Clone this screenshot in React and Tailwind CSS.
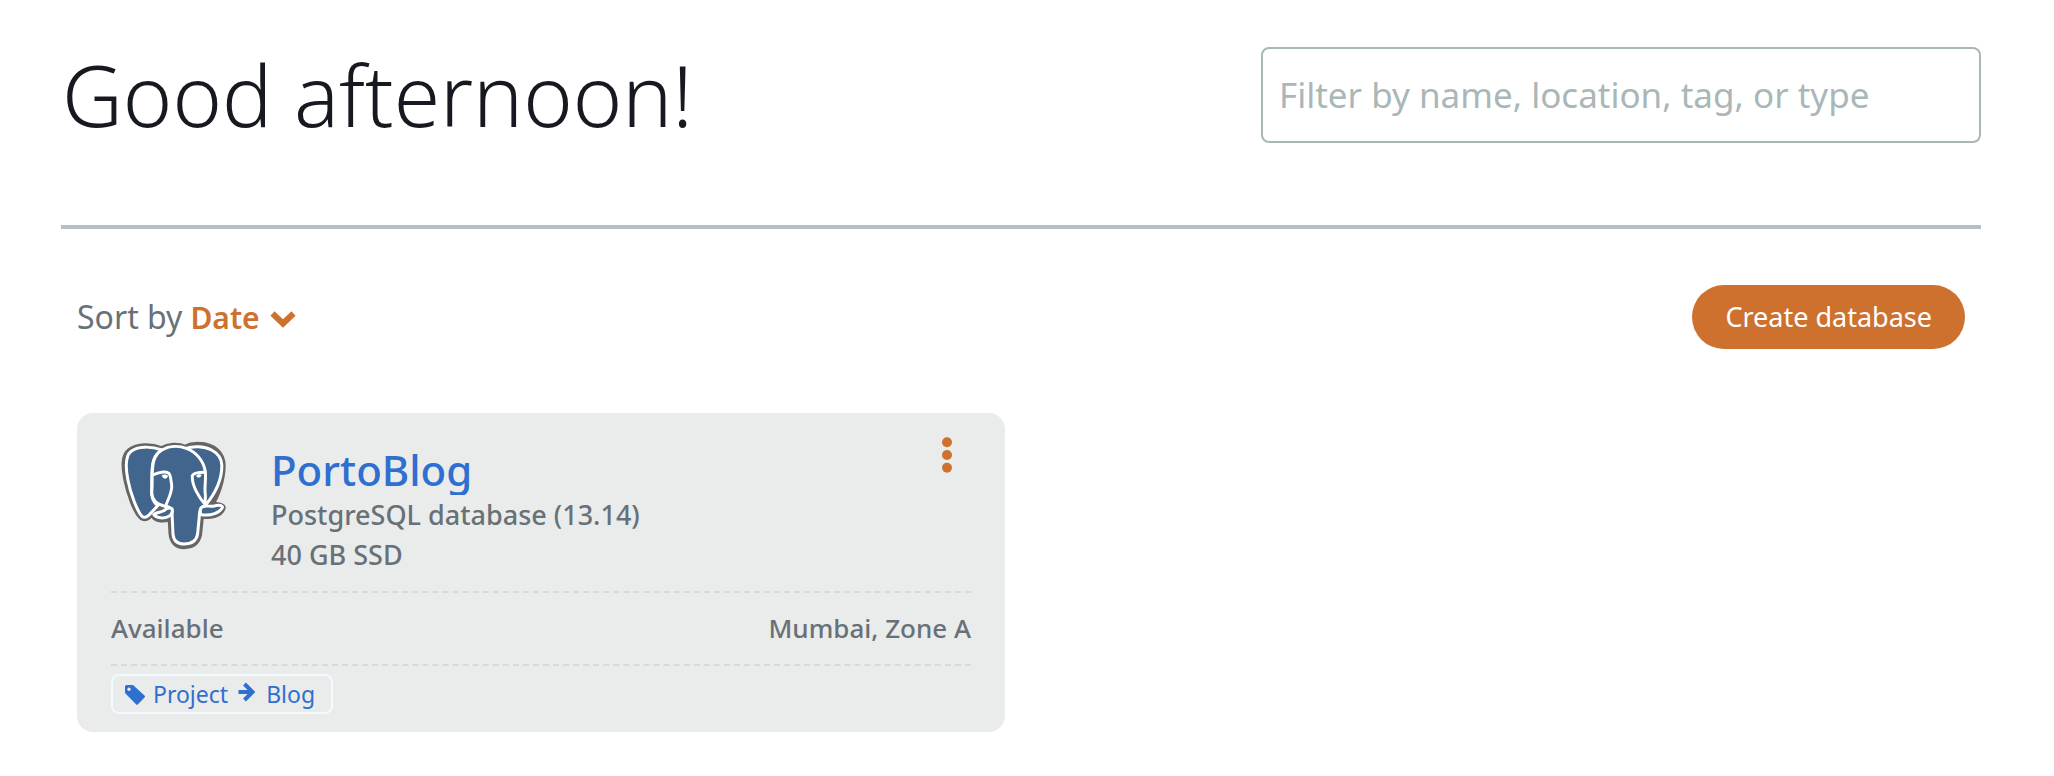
import { useState } from "react";

function ElephantLogo() {
  return (
    <svg viewBox="150 100 324 340" className="h-[113px] w-[108px]" role="img" aria-label="PostgreSQL">
      <g strokeLinejoin="round" strokeLinecap="round">
        <g fill="#646564" stroke="#646564" strokeWidth="23">
          <path d="M278 133C245 121 205 121 184 137C164 152 167 185 174 222C182 264 203 319 219 333C228 340 237 333 247 321L266 301L300 310L306 320L310 385C312 408 325 420 345 420C370 420 383 409 388 388L394 329C425 331 453 325 459 307C459 303 447 303 424 297C442 270 459 222 459 180C459 147 434 121 390 120C370 119 358 124 348 129C326 119 299 121 278 133Z" />
          <path d="M300 310C285 321 267 319 256 328C259 341 288 344 307 333Z" />
        </g>
        <g fill="#41658c" stroke="#fff" strokeWidth="9">
          <path d="M279 133C245 121 205 121 186 137C167 152 169 185 176 222C184 264 205 319 219 333C228 340 237 333 246 322L266 301C254 290 246 280 248 250C248 220 247 185 254 163C259 148 267 139 279 133Z" />
          <path d="M348 129C372 121 405 121 428 133C447 143 459 160 459 180C459 222 440 263 410 299L380 260Z" />
          <path d="M279 133C300 121 329 119 354 129C384 141 405 168 409 198C412 225 406 245 409 265C411 280 406 290 410 299C391 307 392 316 391 334L386 386C383 404 370 416 345 416C324 416 314 406 312 386L309 320C307 305 299 303 290 303C275 300 249 290 248 262C252 220 244 178 259 154C265 144 271 137 279 133Z" />
          <path fill="none" d="M255 207C268 199 290 197 299 203C306 209 305 224 308 237C311 263 294 284 290 303" />
          <path fill="none" d="M409 200C392 200 372 201 370 211C368 240 391 277 410 299" />
          <path d="M309 310C300 303 292 309 284 316C275 321 264 320 254 327C259 338 287 341 301 332C309 326 312 319 309 310Z" />
          <path d="M396 308C405 297 417 304 432 302C445 301 454 294 461 304C456 322 424 333 395 327C394 320 393 313 396 308Z" />
        </g>
      </g>
      <g fill="#fff">
        <path d="M278 209C285 205 294 207 297 211C295 217 290 221 286 219C282 217 279 213 278 209Z" />
        <path d="M382 210C386 206 394 205 398 208C397 213 391 217 387 216C384 215 382 213 382 210Z" />
      </g>
    </svg>
  );
}

function ChevronIcon() {
  return (
    <svg viewBox="0 0 26 18" className="mt-1 h-[18px] w-[26px]" fill="none" stroke="currentColor" strokeWidth="6" aria-hidden="true">
      <path d="M2.5 3.5L13 13.5L23.5 3.5" />
    </svg>
  );
}

function TagIcon() {
  return (
    <svg viewBox="0 0 20 20" className="mt-0.5 size-5" fill="currentColor" aria-hidden="true">
      <path fillRule="evenodd" d="M0 1.5Q0 0 1.5 0H8L19.5 10.5Q20.5 11.5 19.5 12.5L13 19.3Q12 20.3 11 19.3L0 8ZM4 2.5A1.7 1.7 0 1 0 4 5.9A1.7 1.7 0 1 0 4 2.5Z" />
    </svg>
  );
}

function ArrowIcon() {
  return (
    <svg viewBox="0 0 18 20" className="h-5 w-[18px]" fill="none" stroke="currentColor" strokeWidth="4" aria-hidden="true">
      <path d="M0.5 10H14M6.5 2L14.5 10L6.5 18" />
    </svg>
  );
}

function MoreIcon() {
  return (
    <svg viewBox="0 0 10 36" className="h-9 w-[10px]" fill="currentColor" aria-hidden="true">
      <circle cx="5" cy="5.3" r="5" />
      <circle cx="5" cy="18" r="5" />
      <circle cx="5" cy="30.7" r="5" />
    </svg>
  );
}

function DatabaseCard({ name, engine, storage, status, zone, tag }) {
  return (
    <article className="rounded-2xl bg-[#eaeceb] px-[34px] pb-[18px] text-[27px] font-medium text-[#687078]">
      <div className="flex h-[178px] items-start pt-6">
        <div className="ml-2 mt-0.5 shrink-0">
          <ElephantLogo />
        </div>
        <div className="ml-11 grow pt-2">
          <h2 className="text-[42px] leading-[50px] text-[#2f6fcf]">
            <a href="#database" className="block overflow-hidden">{name}</a>
          </h2>
          <p className="leading-10">{engine}</p>
          <p className="leading-10">{storage}</p>
        </div>
        <button type="button" aria-label="More actions" className="mr-[19px] text-[#ce712e]">
          <MoreIcon />
        </button>
      </div>
      <div className="flex h-[75px] items-center justify-between border-y-2 border-dashed border-[#d5dbdb] text-[26px]">
        <span>{status}</span>
        <span>{zone}</span>
      </div>
      <a href="#tag" className="mt-2 flex h-10 w-fit items-center rounded-lg border-2 border-[#f1faff] px-3 text-[23px] font-normal text-[#2f6fcf]">
        <TagIcon />
        <span className="ml-2">{tag.key}</span>
        <span className="mx-[10px] pb-1"><ArrowIcon /></span>
        <span className="mr-1">{tag.value}</span>
      </a>
    </article>
  );
}

export default function App() {
  const [filter, setFilter] = useState("");
  return (
    <main className="min-h-screen bg-white pl-[61px] pr-[73px] pt-[47px] font-['Noto_Sans',sans-serif]">
      <header className="flex items-start justify-between border-b-4 border-[#b7becb] pb-[82px]">
        <h1 className="pl-px text-[84px] leading-[96px] font-light text-[#16191f]">Good afternoon!</h1>
        <input
          type="text"
          aria-label="Filter databases"
          placeholder="Filter by name, location, tag, or type"
          value={filter}
          onChange={(e) => setFilter(e.target.value)}
          className="h-24 w-[720px] rounded-lg border-2 border-[#aab7b8] px-4 pb-0.5 text-[35px] text-[#16191f] placeholder:text-[#aab7b8]"
        />
      </header>
      <div className="flex items-center justify-between px-4 pt-14">
        <div className="flex items-center text-[32px] text-[#687078]">
          <span>Sort by</span>
          <button type="button" className="ml-2 flex items-center gap-2.5 text-[30px] font-semibold text-[#ce712e]">
            Date
            <ChevronIcon />
          </button>
        </div>
        <button type="button" className="h-16 rounded-full bg-[#ce712e] px-[33px] text-[27px] text-white">
          Create database
        </button>
      </div>
      <section className="mt-16 grid grid-cols-2 gap-8 px-4">
        <DatabaseCard
          name="PortoBlog"
          engine="PostgreSQL database (13.14)"
          storage="40 GB SSD"
          status="Available"
          zone="Mumbai, Zone A"
          tag={{ key: "Project", value: "Blog" }}
        />
      </section>
    </main>
  );
}
